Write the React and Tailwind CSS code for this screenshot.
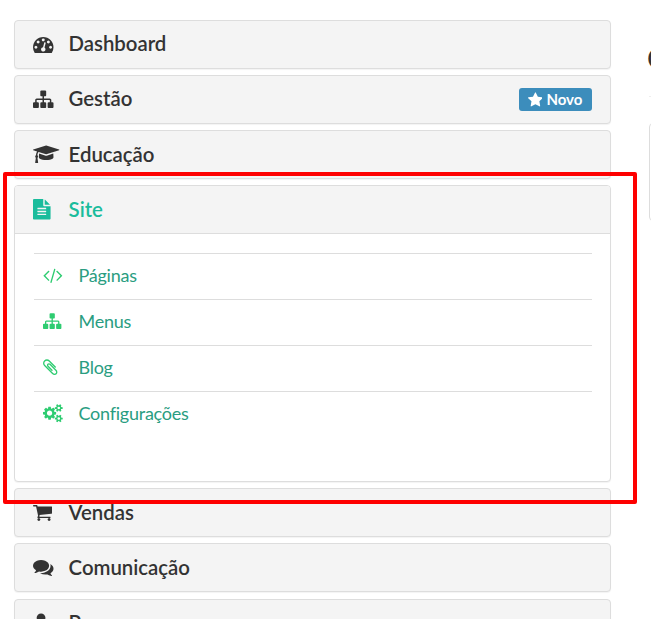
import React from 'react';

const icons = {
  dashboard: [1792, 'M384 1152q0-53-37.5-90.5t-90.5-37.5-90.5 37.5-37.5 90.5 37.5 90.5 90.5 37.5 90.5-37.5 37.5-90.5zm192-448q0-53-37.5-90.5t-90.5-37.5-90.5 37.5-37.5 90.5 37.5 90.5 90.5 37.5 90.5-37.5 37.5-90.5zm428 481l101-382q6-26-7.5-48.5t-38.5-29.5-48 6.5-30 39.5l-101 382q-60 5-107 43.5t-63 98.5q-20 77 20 146t117 89 146-20 89-117q16-60-6-117t-72-91zm660-33q0-53-37.5-90.5t-90.5-37.5-90.5 37.5-37.5 90.5 37.5 90.5 90.5 37.5 90.5-37.5 37.5-90.5zm-640-640q0-53-37.5-90.5t-90.5-37.5-90.5 37.5-37.5 90.5 37.5 90.5 90.5 37.5 90.5-37.5 37.5-90.5zm448 192q0-53-37.5-90.5t-90.5-37.5-90.5 37.5-37.5 90.5 37.5 90.5 90.5 37.5 90.5-37.5 37.5-90.5zm320 448q0 261-141 483-19 29-54 29h-1402q-35 0-54-29-141-221-141-483 0-182 71-348t191-286 286-191 348-71 348 71 286 191 191 286 71 348z'],
  sitemap: [1792, 'M1792 1248v320q0 40-28 68t-68 28h-320q-40 0-68-28t-28-68v-320q0-40 28-68t68-28h96v-192h-512v192h96q40 0 68 28t28 68v320q0 40-28 68t-68 28h-320q-40 0-68-28t-28-68v-320q0-40 28-68t68-28h96v-192h-512v192h96q40 0 68 28t28 68v320q0 40-28 68t-68 28h-320q-40 0-68-28t-28-68v-320q0-40 28-68t68-28h96v-192q0-52 38-90t90-38h512v-192h-96q-40 0-68-28t-28-68v-320q0-40 28-68t68-28h320q40 0 68 28t28 68v320q0 40-28 68t-68 28h-96v192h512q52 0 90 38t38 90v192h96q40 0 68 28t28 68z'],
  graduation: [2304, 'M1774 836l18 316q4 69-82 128t-235 93.5-323 34.5-323-34.5-235-93.5-82-128l18-316 574 181q22 7 48 7t48-7zm530-324q0 23-22 31l-1120 352q-4 1-10 1t-10-1l-652-206q-43 34-71 111.5t-34 178.5q63 36 63 109 0 69-58 107l58 433q2 14-8 25-9 11-24 11h-192q-15 0-24-11-10-11-8-25l58-433q-58-38-58-107 0-73 65-111 11-207 98-330l-333-104q-22-8-22-31t22-31l1120-352q4-1 10-1t10 1l1120 352q22 8 22 31z'],
  file: [1536, 'M1468 476q14 14 28 36h-472v-472q22 14 36 28zm-476 164h544v1056q0 40-28 68t-68 28h-1344q-40 0-68-28t-28-68v-1600q0-40 28-68t68-28h800v544q0 40 28 68t68 28zm160 736v-64q0-14-9-23t-23-9h-704q-14 0-23 9t-9 23v64q0 14 9 23t23 9h704q14 0 23-9t9-23zm0-256v-64q0-14-9-23t-23-9h-704q-14 0-23 9t-9 23v64q0 14 9 23t23 9h704q14 0 23-9t9-23zm0-256v-64q0-14-9-23t-23-9h-704q-14 0-23 9t-9 23v64q0 14 9 23t23 9h704q14 0 23-9t9-23z'],
  cart: [1664, 'M640 1536q0 52-38 90t-90 38-90-38-38-90 38-90 90-38 90 38 38 90zm896 0q0 52-38 90t-90 38-90-38-38-90 38-90 90-38 90 38 38 90zm128-1088v512q0 24-16.5 42.5t-40.5 21.5l-1044 122q13 60 13 70 0 16-24 64h920q26 0 45 19t19 45-19 45-45 19h-1024q-26 0-45-19t-19-45q0-11 8-31.5t16-36 21.5-40 15.5-29.5l-177-823h-204q-26 0-45-19t-19-45 19-45 45-19h256q16 0 28.5 6.5t19.5 15.5 13 24.5 8 26 5.5 29.5 4.5 26h1201q26 0 45 19t19 45z'],
  comments: [1792, 'M1408 768q0 139-94 257t-256.5 186.5-353.5 68.5q-86 0-176-16-124 88-278 128-36 9-86 16h-3q-11 0-20.5-8t-11.5-21q-1-3-1-6.5t.5-6.5 2-6l2.5-5 3.5-5.5 4-5 4.5-5 4-4.5q5-6 23-25t26-29.5 22.5-29 25-38.5 20.5-44q-124-72-195-177t-71-224q0-139 94-257t256.5-186.5 353.5-68.5 353.5 68.5 256.5 186.5 94 257zm384 256q0 120-71 224.5t-195 176.5q10 24 20.5 44t25 38.5 22.5 29 26 29.5 23 25q1 1 4 4.5t4.5 5 4 5 3.5 5.5l2.5 5 2 6 .5 6.5-1 6.5q-3 14-13 22t-22 7q-50-7-86-16-154-40-278-128-90 16-176 16-271 0-472-132 58 4 88 4 161 0 309-45t264-129q125-92 192-212t67-254q0-77-23-152 129 71 204 178t75 230z'],
  user: [1408, 'M1408 1405q0 120-73 189.5t-194 69.5h-874q-121 0-194-69.5t-73-189.5q0-53 3.5-103.5t14-109 26.5-108.5 43-97.5 62-81 85.5-53.5 111.5-20q9 0 42 21.5t74.5 48 108 48 133.5 21.5 133.5-21.5 108-48 74.5-48 42-21.5q61 0 111.5 20t85.5 53.5 62 81 43 97.5 26.5 108.5 14 109 3.5 103.5zm-320-893q0 159-112.5 271.5t-271.5 112.5-271.5-112.5-112.5-271.5 112.5-271.5 271.5-112.5 271.5 112.5 112.5 271.5z'],
  code: [1920, 'M617 1399l-50 50q-10 10-23 10t-23-10l-466-466q-10-10-10-23t10-23l466-466q10-10 23-10t23 10l50 50q10 10 10 23t-10 23l-393 393 393 393q10 10 10 23t-10 23zm591-1067l-373 1291q-4 13-15.5 19.5t-23.5 2.5l-62-17q-13-4-19.5-15.5t-2.5-24.5l373-1291q4-13 15.5-19.5t23.5-2.5l62 17q13 4 19.5 15.5t2.5 24.5zm657 651l-466 466q-10 10-23 10t-23-10l-50-50q-10-10-10-23t10-23l393-393-393-393q-10-10-10-23t10-23l50-50q10-10 23-10t23 10l466 466q10 10 10 23t-10 23z'],
  clip: [1408, 'M1404 1385q0 117-79 196t-196 79q-135 0-235-100l-777-776q-113-115-113-271 0-159 110-270t269-111q158 0 273 113l605 606q10 10 10 22 0 16-30.5 46.5t-46.5 30.5q-13 0-23-10l-606-607q-79-77-181-77-106 0-179 75t-73 181q0 105 76 181l776 777q63 63 145 63 64 0 106-42t42-106q0-82-63-145l-581-581q-26-24-60-24-29 0-48 19t-19 48q0 32 25 59l410 410q10 10 10 22 0 16-31 47t-47 31q-12 0-22-10l-410-410q-63-61-63-149 0-82 57-139t139-57q88 0 149 63l581 581q100 98 100 235z'],
  cogs: [1920, 'M896 896q0-106-75-181t-181-75-181 75-75 181 75 181 181 75 181-75 75-181zm768 512q0-52-38-90t-90-38-90 38-38 90q0 53 37.5 90.5t90.5 37.5 90.5-37.5 37.5-90.5zm0-1024q0-52-38-90t-90-38-90 38-38 90q0 53 37.5 90.5t90.5 37.5 90.5-37.5 37.5-90.5zm-384 421v185q0 10-7 19.5t-16 10.5l-155 24q-11 35-32 76 34 48 90 115 7 11 7 20 0 12-7 19-23 30-82.5 89.5t-78.5 59.5q-11 0-21-7l-115-90q-37 19-77 31-11 108-23 155-7 24-30 24h-186q-11 0-20-7.5t-10-17.5l-23-153q-34-10-75-31l-118 89q-7 7-20 7-11 0-21-8-144-133-144-160 0-9 7-19 10-14 41-53t47-61q-23-44-35-82l-152-24q-10-1-17-9.5t-7-19.5v-185q0-10 7-19.5t16-10.5l155-24q11-35 32-76-34-48-90-115-7-11-7-20 0-12 7-20 22-30 82-89t79-59q11 0 21 7l115 90q34-18 77-32 11-108 23-154 7-24 30-24h186q11 0 20 7.5t10 17.5l23 153q34 10 75 31l118-89q8-7 20-7 11 0 21 8 144 133 144 160 0 8-7 19-12 16-42 54t-45 60q23 48 34 82l152 23q10 2 17 10.5t7 19.5zm640 533v140q0 16-149 31-12 27-30 52 51 113 51 138 0 4-4 7-122 71-124 71-8 0-46-47t-52-68q-20 2-30 2t-30-2q-14 21-52 68t-46 47q-2 0-124-71-4-3-4-7 0-25 51-138-18-25-30-52-149-15-149-31v-140q0-16 149-31 13-29 30-52-51-113-51-138 0-4 4-7 4-2 35-20t59-34 30-16q8 0 46 46.5t52 67.5q20-2 30-2t30 2q51-71 92-112l6-2q4 0 124 70 4 3 4 7 0 25-51 138 17 23 30 52 149 15 149 31zm0-1024v140q0 16-149 31-12 27-30 52 51 113 51 138 0 4-4 7-122 71-124 71-8 0-46-47t-52-68q-20 2-30 2t-30-2q-14 21-52 68t-46 47q-2 0-124-71-4-3-4-7 0-25 51-138-18-25-30-52-149-15-149-31v-140q0-16 149-31 13-29 30-52-51-113-51-138 0-4 4-7 4-2 35-20t59-34 30-16q8 0 46 46.5t52 67.5q20-2 30-2t30 2q51-71 92-112l6-2q4 0 124 70 4 3 4 7 0 25-51 138 17 23 30 52 149 15 149 31z'],
  star: [1664, 'M1664 647q0 22-26 48l-363 354 86 500q1 7 1 20 0 21-10.5 35.5t-30.5 14.5q-19 0-40-12l-449-236-449 236q-22 12-40 12-21 0-31.5-14.5t-10.5-35.5q0-6 2-20l86-500-364-354q-25-27-25-48 0-37 56-46l502-73 225-455q19-41 49-41t49 41l225 455 502 73q56 9 56 46z'],
};

// The glyph's width follows its view box, so only a height class is needed.
function Icon({ name, className }) {
  const [width, d] = icons[name];
  return (
    <svg viewBox={`0 0 ${width} 1792`} className={className} fill="currentColor" aria-hidden="true">
      <path d={d} />
    </svg>
  );
}

function Heading({ icon, label, badge }) {
  return (
    <div className="flex h-full items-center pr-[18px] pl-[18.4px]">
      <span className="flex w-9 shrink-0 pb-px">
        <Icon name={icon} className="h-[20.5px] w-auto" />
      </span>
      <span className="-mt-[2.4px] -ml-[0.8px] text-[20.4px] leading-6 font-semibold tracking-[-0.02px]">{label}</span>
      {badge && (
        <span className="ml-auto flex h-[23px] w-[73px] items-center justify-center gap-1 rounded-[3px] bg-[#3c8dbc] pr-px text-[15px] font-bold text-white">
          <Icon name="star" className="h-4 w-auto" />
          <span className="-mt-px leading-none">{badge}</span>
        </span>
      )}
    </div>
  );
}

function Panel(props) {
  return (
    <div className="h-[49px] shrink-0 rounded border border-[#ddd] bg-[#f4f4f4] text-[#333] shadow-[0_1px_1px_rgba(0,0,0,0.05)]">
      <Heading {...props} />
    </div>
  );
}

const links = [
  ['code', 'Páginas'],
  ['sitemap', 'Menus'],
  ['clip', 'Blog'],
  ['cogs', 'Configurações'],
];

export default function App() {
  return (
    <div className="relative flex h-[619px] w-[651px] overflow-hidden bg-white font-['Lato',sans-serif]">
      <aside className="ml-3.5 flex w-[597px] shrink-0 flex-col gap-[6.15px] pt-5">
        <Panel icon="dashboard" label="Dashboard" />
        <Panel icon="sitemap" label="Gestão" badge="Novo" />
        <Panel icon="graduation" label="Educação" />
        <section className="h-[296.7px] shrink-0 overflow-hidden rounded border border-[#ddd] bg-white shadow-[0_1px_1px_rgba(0,0,0,0.05)]">
          <div className="h-[47px] bg-[#f4f4f4] text-[#1abc9c]">
            <Heading icon="file" label="Site" />
          </div>
          <div className="border-t border-[#ddd] pt-[19px] pr-[18px] pl-[19px]">
            {links.map(([icon, label]) => (
              <a key={label} className="flex h-[46px] items-center border-t border-[#ddd] pb-1 pl-[9.2px] text-[#2a9d81]">
                <span className="flex w-9 shrink-0 pt-px text-[#2ecc71]">
                  <Icon name={icon} className="h-[18.4px] w-auto" />
                </span>
                <span className="-ml-[0.7px] text-[18px] leading-6 tracking-[-0.25px]">{label}</span>
              </a>
            ))}
          </div>
        </section>
        <Panel icon="cart" label="Vendas" />
        <Panel icon="comments" label="Comunicação" />
        <Panel icon="user" label="Pessoas" />
      </aside>
      <main className="ml-[36px] w-80 shrink-0 pt-[42px]">
        <h1 className="text-[28px] leading-8 text-[#333]">Conteúdo</h1>
        <div className="mt-[22px] ml-0.5 border-t border-[#eee]" />
        <div className="mt-[26px] ml-0.5 h-[98px] rounded border border-[#ddd]" />
      </main>
      <div className="absolute top-[172px] left-[3px] h-[332px] w-[634px] rounded-[2px] border-4 border-[#fe0000]" />
    </div>
  );
}
